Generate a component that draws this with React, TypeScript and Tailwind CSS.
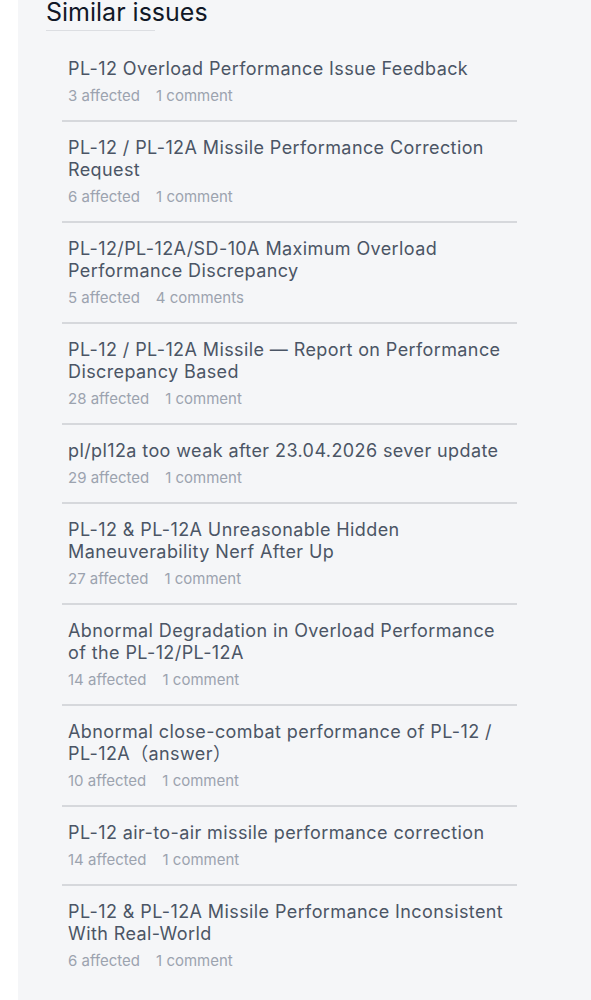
import React from "react";

type Issue = {
  title: string;
  affected: number;
  comments: number;
};

const issues: Issue[] = [
  { title: "PL-12 Overload Performance Issue Feedback", affected: 3, comments: 1 },
  { title: "PL-12 / PL-12A Missile Performance Correction Request", affected: 6, comments: 1 },
  { title: "PL-12/PL-12A/SD-10A Maximum Overload Performance Discrepancy", affected: 5, comments: 4 },
  { title: "PL-12 / PL-12A Missile — Report on Performance Discrepancy Based", affected: 28, comments: 1 },
  { title: "pl/pl12a too weak after 23.04.2026 sever update", affected: 29, comments: 1 },
  { title: "PL-12 & PL-12A Unreasonable Hidden Maneuverability Nerf After Up", affected: 27, comments: 1 },
  { title: "Abnormal Degradation in Overload Performance of the PL-12/PL-12A", affected: 14, comments: 1 },
  { title: "Abnormal close-combat performance of PL-12 / PL-12A（answer）", affected: 10, comments: 1 },
  { title: "PL-12 air-to-air missile performance correction", affected: 14, comments: 1 },
  { title: "PL-12 & PL-12A Missile Performance Inconsistent With Real-World", affected: 6, comments: 1 },
];

function IssueRow({ issue }: { issue: Issue }) {
  return (
    <li className="px-[6px] pt-[15px] pb-[14px]">
      <a href="#" className="block text-[18px] leading-[22px] tracking-[0.4px] text-[#4b5565]">
        {issue.title}
      </a>
      <div className="mt-[6px] flex gap-4 text-[15px] leading-[20px] text-[#9ca3af]">
        <span>{issue.affected} affected</span>
        <span>
          {issue.comments} {issue.comments === 1 ? "comment" : "comments"}
        </span>
      </div>
    </li>
  );
}

export default function App() {
  return (
    <div className="min-h-[1000px] bg-white pl-[18px] font-['Inter','Noto_Sans_CJK_SC',sans-serif]">
      <section className="min-h-[1000px] bg-[#f5f6f8] pl-[28px]">
        <h2 className="text-[25px] leading-[24px] text-[#111827]">Similar issues</h2>
        <div className="mt-[6px] h-px w-[109px] bg-[#dcdee2]" />
        <ul className="mt-[12px] ml-[16px] w-[455px] divide-y-2 divide-[#d6d8dc]">
          {issues.map((issue) => (
            <IssueRow key={issue.title} issue={issue} />
          ))}
        </ul>
      </section>
    </div>
  );
}
